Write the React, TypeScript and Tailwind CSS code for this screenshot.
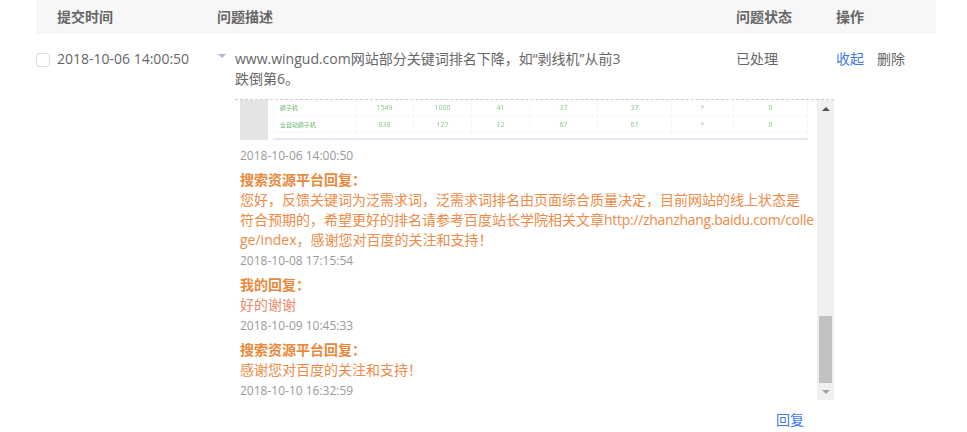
const rows = [
  ["磷子机", "1549", "1000", "41", "37", "37", "*", "0"],
  ["全自动磷子机", "838", "127", "12", "67", "67", "*", "0"],
];

const Reply = ({ title, children, date, textColor }: any) => {
  return (
    <div>
      <p className="mt-1 font-bold text-[#e8893c]">{title}</p>
      <p className={`whitespace-nowrap ${textColor}`}>{children}</p>
      <p className="mt-px text-xs leading-5 text-[#999]">{date}</p>
    </div>
  );
};

// the picture at the top of the thread, scrolled so only its last rows show
const TablePicture = () => {
  return (
    <div className="flex h-10 mb-1.5">
      <div className="w-7 bg-[#e4e4e4]"></div>
      <div className="ml-[5px] w-[535px] flex flex-col">
        <div className="h-[33px] blur-[0.4px]">
          {rows.map((row) => (
            <div key={row[0]} className="grid grid-cols-[83px_58px_58px_58px_68px_74px_62px_74px] h-4 mb-px border-b border-[#f7f7f7]">
              {row.map((cell, i) => (
                <div
                  key={i}
                  className={`border-r border-[#f7f7f7] leading-4 ${i === 0 ? "pl-1.5 border-l text-[6px] text-[#6fb46f]" : "text-center text-[7px] text-[#8cc58c]"} ${i === 6 ? "text-[#bbb]" : ""}`}
                >
                  {cell}
                </div>
              ))}
            </div>
          ))}
        </div>
        <div className="mt-[5px] h-0.5 bg-[#e4e8f4]"></div>
      </div>
    </div>
  );
};

const ScrollBar = () => {
  return (
    <div className="w-[17px] bg-[#f0f0f0] flex flex-col items-center">
      <div className="h-[17px] flex items-center justify-center">
        <div className="w-0 h-0 border-x-4 border-x-transparent border-b-4 border-b-[#505050]"></div>
      </div>
      <div className="flex-1"></div>
      <div className="w-[13px] h-[67px] bg-[#c1c1c1]"></div>
      <div className="h-[17px] flex items-center justify-center">
        <div className="w-0 h-0 border-x-4 border-x-transparent border-t-4 border-t-[#a3a3a3]"></div>
      </div>
    </div>
  );
};

export default function App() {
  return (
    <div className="w-[967px] h-[432px] bg-white overflow-hidden pl-9 text-sm leading-5 text-[#666] font-['Open_Sans','Noto_Sans_CJK_SC',sans-serif]">
      <div className="w-[900px] h-[34px] bg-[#f7f7f7] flex items-center font-bold">
        <div className="w-[21px]"></div>
        <div className="w-40">提交时间</div>
        <div className="w-[519px]">问题描述</div>
        <div className="w-[100px]">问题状态</div>
        <div className="w-[100px]">操作</div>
      </div>

      <div className="flex pt-[15px]">
        <div className="w-[21px] pt-1">
          <div className="w-3.5 h-3.5 border border-[#ddd] rounded-[3px]"></div>
        </div>
        <div className="w-40">2018-10-06 14:00:50</div>
        <div className="w-[519px]">
          <div className="flex">
            <div className="w-[18px] pt-[5px]">
              <div className="ml-px w-0 h-0 border-x-4 border-x-transparent border-t-4 border-t-[#a9b6d2]"></div>
            </div>
            <div className="w-[390px]">www.wingud.com网站部分关键词排名下降，如“剥线机”从前3跌倒第6。</div>
          </div>
          <div className="-mr-[98px] ml-[18px] mt-2.5 border-t border-dashed border-[#ccc] h-[301px] flex">
            <div className="w-[582px] pl-[5px] overflow-hidden">
              <TablePicture />
              <p className="text-xs leading-5 text-[#999]">2018-10-06 14:00:50</p>
              <Reply title="搜索资源平台回复：" date="2018-10-08 17:15:54" textColor="text-[#ee8a45]">
                您好，反馈关键词为泛需求词，泛需求词排名由页面综合质量决定，目前网站的线上状态是
                <br />
                符合预期的，希望更好的排名请参考百度站长学院相关文章
                <span className="tracking-[-0.3px]">http://zhanzhang.baidu.com/colle</span>
                <br />
                ge/index，感谢您对百度的关注和支持！
              </Reply>
              <Reply title="我的回复：" date="2018-10-09 10:45:33" textColor="text-[#ea8a6c]">好的谢谢</Reply>
              <Reply title="搜索资源平台回复：" date="2018-10-10 16:32:59" textColor="text-[#ee8a45]">感谢您对百度的关注和支持！</Reply>
            </div>
            <ScrollBar />
          </div>
          <div className="mt-2.5 pl-[559px] whitespace-nowrap text-[#4179e8]">回复</div>
        </div>
        <div className="w-[100px]">已处理</div>
        <div className="w-[100px] flex gap-[13px]">
          <span className="text-[#4179e8]">收起</span>
          <span>删除</span>
        </div>
      </div>
    </div>
  );
}
